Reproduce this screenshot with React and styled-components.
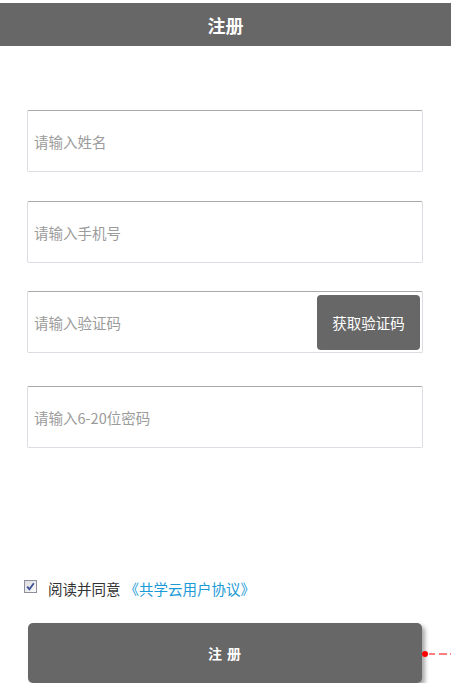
import React from 'react';
import styled, { createGlobalStyle } from 'styled-components';

const GlobalStyle = createGlobalStyle`
	html, body {
		margin: 0;
		padding: 0;
		background: #fff;
	}
	body {
		font-family: 'Noto Sans CJK SC', 'Noto Sans', sans-serif;
		color: #333;
	}
`;

const Page = styled.div`
	width: 451px;
	padding-top: 3px;
`;

const Header = styled.header`
	height: 43px;
	background: #676767;
	color: #fff;
	display: flex;
	align-items: center;
	justify-content: center;
	font-size: 18px;
	font-weight: 700;
	line-height: 1;
`;

const Form = styled.form`
	display: flex;
	flex-direction: column;
	padding: 64px 28px 0 27px;
`;

const Field = styled.div`
	display: flex;
	align-items: stretch;
	height: 62px;
	box-sizing: border-box;
	margin-top: ${(p) => p.$top || 0}px;
	padding: 3px 2px 2px 0;
	border: 1px solid #dcdde2;
	border-top-color: #a9a9a9;
	border-radius: 2px;
`;

const Input = styled.input`
	flex: 1;
	min-width: 0;
	border: none;
	outline: none;
	background: transparent;
	padding: 0 0 0 6px;
	font-family: inherit;
	font-size: 14.5px;
	color: #333;

	&::placeholder {
		color: #9b9b9b;
	}
`;

const CodeButton = styled.button`
	width: 103px;
	border: none;
	border-radius: 4px;
	background: #676767;
	color: #fff;
	font-family: inherit;
	font-size: 14.5px;
	padding: 0;
	cursor: pointer;
`;

const Agreement = styled.div`
	display: flex;
	align-items: center;
	margin: 131px 0 0 -3px;
	font-size: 14.5px;
	line-height: 20px;
`;

const Check = styled.span`
	width: 13px;
	height: 13px;
	box-sizing: border-box;
	border: 1px solid #8f8f9d;
	background: linear-gradient(135deg, #dcdcdc, #fbfbfb);
	display: flex;
	align-items: center;
	justify-content: center;
	margin-right: 11px;
	margin-top: -6px;
`;

const AgreeText = styled.span`
	color: #333;
`;

const Link = styled.a`
	color: #1a9ad6;
	text-decoration: none;
	margin-left: 4px;
`;

const SubmitWrap = styled.div`
	position: relative;
	margin: 24px 1px 0 1px;
`;

const Submit = styled.button`
	width: 100%;
	height: 60px;
	border: none;
	border-radius: 5px;
	background: #676767;
	color: #fff;
	font-family: inherit;
	font-size: 14px;
	font-weight: 700;
	letter-spacing: 1px;
	box-shadow: 3px 3px 4px rgba(0, 0, 0, 0.35);
	cursor: pointer;
`;

const Marker = styled.svg`
	position: absolute;
	left: 100%;
	top: 28px;
	margin-left: -1px;
`;

const App = () => {
	return (
		<Page>
			<GlobalStyle />
			<Header>注册</Header>
			<Form onSubmit={(e) => e.preventDefault()}>
				<Field>
					<Input placeholder='请输入姓名' />
				</Field>
				<Field $top={29}>
					<Input placeholder='请输入手机号' />
				</Field>
				<Field $top={28}>
					<Input placeholder='请输入验证码' />
					<CodeButton type='button'>获取验证码</CodeButton>
				</Field>
				<Field $top={33}>
					<Input placeholder='请输入6-20位密码' />
				</Field>
				<Agreement>
					<Check>
						<svg width='9' height='9' viewBox='0 0 9 9'>
							<path
								d='M1.2 4.6 L3.4 7.2 L7.8 1.2'
								fill='none'
								stroke='#3d4f9a'
								strokeWidth='1.8'
							/>
						</svg>
					</Check>
					<AgreeText>阅读并同意</AgreeText>
					<Link href='#'>《共学云用户协议》</Link>
				</Agreement>
				<SubmitWrap>
					<Submit type='submit'>注 册</Submit>
					<Marker width='30' height='6' viewBox='0 0 30 6'>
						<circle cx='4' cy='3' r='3' fill='#f00' />
						<path d='M8 3 H14 M18 3 H26 M29 3 H30' stroke='#f00' strokeWidth='1.2' />
					</Marker>
				</SubmitWrap>
			</Form>
		</Page>
	);
};

export default App;
